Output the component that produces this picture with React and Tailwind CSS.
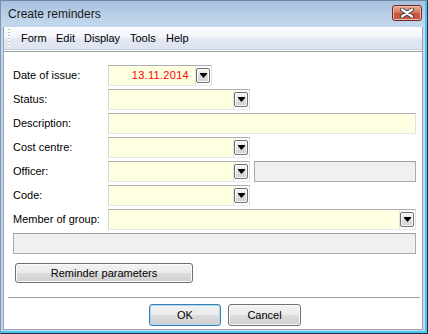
import React from "react";

const font = { fontFamily: '"Liberation Sans", Arial, sans-serif' };

function DropBtn() {
  return (
    <div className="w-[14px] h-[15px] rounded-[2px] border border-[#707070] flex items-center justify-center bg-[linear-gradient(#f6f6f6,#e0e0e0_50%,#cfcfcf)] shadow-[inset_0_0_0_1px_#fbfbfb]">
      <svg width="7" height="5" viewBox="0 0 7 5">
        <rect x="0" y="0" width="7" height="1" fill="#000" />
        <path d="M0 1h7L3.5 5z" fill="#000" />
      </svg>
    </div>
  );
}

function Combo({ className, children }) {
  return (
    <div
      className={
        "flex h-[21px] border border-t-[#abadb3] border-l-[#d5d7dd] border-r-[#dbdfe6] border-b-[#e3e9ef] " +
        className
      }
    >
      <div className="flex-1 bg-[#ffffe1] flex items-center justify-end pr-[6px]">{children}</div>
      <div className="w-[16px] bg-white border-l border-[#e4e4e4] flex items-center">
        <DropBtn />
      </div>
    </div>
  );
}

function Field({ className }) {
  return (
    <div
      className={
        "h-[21px] bg-[#ffffe1] border border-t-[#abadb3] border-l-[#d5d7dd] border-r-[#dbdfe6] border-b-[#e3e9ef] " +
        className
      }
    />
  );
}

function Gray({ className }) {
  return <div className={"h-[21px] bg-[#f0f0f0] border border-[#a9a9a9] border-t-[#a0a0a0] " + className} />;
}

function Row({ label, children }) {
  return (
    <div className="flex items-center h-[21px]">
      <div className="w-[95px] text-[11px] text-black leading-none">{label}</div>
      {children}
    </div>
  );
}

function WinButton({ children, className, focused }) {
  return (
    <div
      className={
        "flex items-center justify-center rounded-[3px] border text-[11px] text-black bg-[linear-gradient(#f2f2f2_0%,#ebebeb_50%,#dddddd_50%,#cfcfcf_100%)] " +
        (focused
          ? "border-[#3c7fb1] shadow-[inset_0_0_0_1px_#a7dcf4] "
          : "border-[#707070] shadow-[inset_0_0_0_1px_#fbfbfb] ") +
        className
      }
    >
      {children}
    </div>
  );
}

export default function App() {
  return (
    <div
      style={font}
      className="w-[428px] h-[334px] border border-t-[#6f87a8] border-l-[#7d93b2] border-r-[#1f2f40] border-b-[#1f2f40] overflow-hidden"
    >
      <div className="w-full h-full border-r-2 border-b-2 border-[#4cc6ee] bg-[#c4d7ec] flex flex-col">
        {/* Title bar */}
        <div className="relative h-[26px] shrink-0 flex items-center pl-[7px] bg-[linear-gradient(#a7c0dd,#bcd1e9_60%,#c4d7ec)]">
          <span className="text-[12px] text-[#1a1a1a]">Create reminders</span>
          <div className="absolute left-[391px] top-[4px] w-[30px] h-[16px] rounded-[3px] border border-[#6b2a22] bg-[linear-gradient(#eaa796,#d77a66_45%,#c8533e_55%,#c65b44)] shadow-[inset_0_0_0_1px_#f0b8a8] flex items-center justify-center">
            <svg width="14" height="10" viewBox="0 0 14 10">
              <path d="M2 1.5L12 8.5M12 1.5L2 8.5" stroke="#3a3a3a" strokeWidth="4" strokeLinecap="round" />
              <path d="M2 1.5L12 8.5M12 1.5L2 8.5" stroke="#ffffff" strokeWidth="2.2" strokeLinecap="round" />
            </svg>
          </div>
        </div>
        {/* Window body */}
        <div className="flex-1 mx-[2px] border border-t-0 border-[#98a4b6] bg-white flex flex-col">
          {/* Menu bar */}
          <div className="h-[23px] shrink-0 border-b border-[#c3ccdb] bg-[linear-gradient(#fcfdfe_0%,#f2f5fa_45%,#e3e8f3_55%,#dde4f0_100%)] flex items-center">
            <div className="ml-[4px] w-[2px] h-[18px] bg-[repeating-linear-gradient(#b8c0cc_0px,#b8c0cc_1px,#ffffff_1px,#ffffff_3px)]" />
            <div className="ml-[11px] flex text-[11px] text-black">
              <span className="w-[35px]">Form</span>
              <span className="w-[28px]">Edit</span>
              <span className="w-[46px]">Display</span>
              <span className="w-[36px]">Tools</span>
              <span>Help</span>
            </div>
          </div>
          <div className="h-[1px] bg-white" />
          {/* Client area */}
          <div className="flex-1 border-t border-[#a0a0a0] pl-[9px] pt-[13px] flex flex-col">
            <div className="flex flex-col gap-[3px]">
              <Row label="Date of issue:">
                <Combo className="w-[104px]">
                  <span className="text-[11px] text-[#ff0000] tracking-[0.3px]">13.11.2014</span>
                </Combo>
              </Row>
              <Row label="Status:">
                <Combo className="w-[142px]" />
              </Row>
              <Row label="Description:">
                <Field className="w-[308px]" />
              </Row>
              <Row label="Cost centre:">
                <Combo className="w-[142px]" />
              </Row>
              <Row label="Officer:">
                <Combo className="w-[142px]" />
                <Gray className="ml-[4px] w-[162px]" />
              </Row>
              <Row label="Code:">
                <Combo className="w-[142px]" />
              </Row>
              <Row label="Member of group:">
                <Combo className="w-[308px]" />
              </Row>
              <Gray className="w-[403px]" />
            </div>
            <WinButton className="mt-[9px] ml-[2px] w-[178px] h-[20px]">Reminder parameters</WinButton>
            <div className="mt-[14px] -ml-[5px] w-[412px] h-[1px] bg-[#a0a0a0]" />
            <div className="mt-[6px] flex">
              <WinButton focused className="ml-[136px] w-[72px] h-[22px]">OK</WinButton>
              <WinButton className="ml-[7px] w-[73px] h-[22px]">Cancel</WinButton>
            </div>
          </div>
        </div>
        <div className="h-[1px] shrink-0" />
      </div>
    </div>
  );
}
